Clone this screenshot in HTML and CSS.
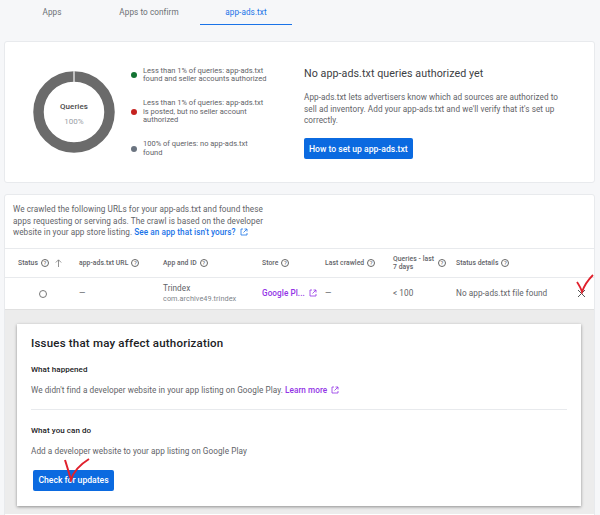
FILE: index.html
```html
<!DOCTYPE html>
<html>
  <head>
    <link rel="stylesheet" href="styles.css">
  </head>
  <body>
    <div class="tabs">
      <div class="tab">Apps</div>
      <div class="tab">Apps to confirm</div>
      <div class="tab active">app-ads.txt</div>
    </div>

    <div class="card summary">
      <div class="donut">
        <svg width="82" height="82" viewBox="0 0 82 82">
          <circle cx="41" cy="41" r="35.5" fill="none" stroke="#6b6b6b" stroke-width="10.5"></circle>
          <rect x="40.3" y="0" width="1.4" height="11" fill="#e4e4e4"></rect>
        </svg>
        <div class="donut-label">
          <div class="donut-title">Queries</div>
          <div class="donut-value">100%</div>
        </div>
      </div>

      <div class="legend">
        <div class="legend-item">
          <span class="dot green"></span>
          <span>Less than 1% of queries: app-ads.txt found and seller accounts authorized</span>
        </div>
        <div class="legend-item">
          <span class="dot red"></span>
          <span>Less than 1% of queries: app-ads.txt is posted, but no seller account authorized</span>
        </div>
        <div class="legend-item">
          <span class="dot gray"></span>
          <span>100% of queries: no app-ads.txt found</span>
        </div>
      </div>

      <div class="about">
        <h2>No app-ads.txt queries authorized yet</h2>
        <p>App-ads.txt lets advertisers know which ad sources are authorized to sell ad inventory. Add your app-ads.txt and we'll verify that it's set up correctly.</p>
        <button class="btn">How to set up app-ads.txt</button>
      </div>
    </div>

    <div class="card results">
      <p class="intro">
        We crawled the following URLs for your app-ads.txt and found these apps requesting or serving ads. The crawl is based on the developer website in your app store listing.
        <a class="link">See an app that isn't yours?
          <svg class="ext" width="8" height="8" viewBox="0 0 8 8"><path d="M3 1H1v6h6V5M4.500 1H7v2.500M7 1L3.500 4.500" fill="none" stroke="currentColor" stroke-width=".8"></path></svg>
        </a>
      </p>

      <div class="grid head">
        <div class="th">Status <span class="help">?</span>
          <svg class="sort" width="7" height="8" viewBox="0 0 7 8"><path d="M3.500 8V1M.8 3.500l2.700-2.700 2.700 2.700" fill="none" stroke="#777" stroke-width=".8"></path></svg>
        </div>
        <div class="th">app-ads.txt URL <span class="help">?</span></div>
        <div class="th">App and ID <span class="help">?</span></div>
        <div class="th">Store <span class="help">?</span></div>
        <div class="th">Last crawled <span class="help">?</span></div>
        <div class="th"><span class="th-wrap">Queries - last 7 days</span> <span class="help">?</span></div>
        <div class="th">Status details <span class="help">?</span></div>
      </div>

      <div class="grid row">
        <div class="radio-cell"><span class="radio"></span></div>
        <div>—</div>
        <div>
          <div>Trindex</div>
          <div class="app-id">com.archive49.trindex</div>
        </div>
        <div class="store">Google Pl...
          <svg class="ext" width="8" height="8" viewBox="0 0 8 8"><path d="M3 1H1v6h6V5M4.500 1H7v2.500M7 1L3.500 4.500" fill="none" stroke="currentColor" stroke-width=".8"></path></svg>
        </div>
        <div>—</div>
        <div>&lt; 100</div>
        <div class="details">No app-ads.txt file found
          <svg class="close" width="9" height="9" viewBox="0 0 9 9"><path d="M1 1l7 7M8 1L1 8" stroke="#555" stroke-width="1"></path></svg>
        </div>
      </div>

      <div class="expanded">
        <div class="issues">
          <h3>Issues that may affect authorization</h3>
          <h4>What happened</h4>
          <p>We didn't find a developer website in your app listing on Google Play. <a class="store">Learn more
            <svg class="ext" width="8" height="8" viewBox="0 0 8 8"><path d="M3 1H1v6h6V5M4.500 1H7v2.500M7 1L3.500 4.500" fill="none" stroke="currentColor" stroke-width=".8"></path></svg>
          </a></p>
          <hr>
          <h4>What you can do</h4>
          <p>Add a developer website to your app listing on Google Play</p>
          <button class="btn">Check for updates</button>
        </div>
      </div>
    </div>

    <!-- red marks drawn over the screenshot -->
    <svg class="mark mark-close" width="18" height="20" viewBox="0 0 18 20"><path d="M1 8c2 3 4 6 5 10C8 12 12 6 17 1" fill="none" stroke="#e0202c" stroke-width="1.800"></path></svg>
    <svg class="mark mark-check" width="26" height="24" viewBox="0 0 26 24"><path d="M1 2c2 6 4 13 6 20C9 14 17 6 25 1" fill="none" stroke="#e0202c" stroke-width="2"></path></svg>
  </body>
</html>
```

FILE: styles.css
```css
body {
  position: relative;
  height: 515px;
  margin: 0;
  padding: 0 4px;
  box-sizing: border-box;
  overflow: hidden;
  background-color: #f6f7f9;
  color: #5f6368;
  font-family: Roboto, "Liberation Sans", sans-serif;
  font-size: 8.200px;
  line-height: 11.700px;
  letter-spacing: 0.06px;
}

h2, h3, h4, p {
  margin: 0;
  font-weight: normal;
}

.tabs {
  display: flex;
  gap: 5px;
  height: 26px;
  margin-bottom: 15px;
  padding-left: 2px;
}

.tab {
  width: 92px;
  height: 24px;
  line-height: 24px;
  text-align: center;
  color: #6b6f74;
}

.tab.active {
  color: #1a73e8;
  border-bottom: 1px solid #1a73e8;
}

.card {
  box-sizing: border-box;
  width: 591px;
  background-color: white;
  border: 1px solid #e8eaed;
  border-radius: 3px;
}

.summary {
  display: flex;
  align-items: center;
  height: 142px;
  margin-bottom: 11px;
  padding-left: 28px;
}

.donut {
  position: relative;
  width: 82px;
  height: 82px;
  margin-right: 16px;
}

.donut svg {
  display: block;
}

.donut-label {
  position: absolute;
  top: 30px;
  left: 0;
  right: 0;
  text-align: center;
  font-size: 8px;
}

.donut-title {
  color: #4a4a4a;
  font-weight: 500;
}

.donut-value {
  margin-top: 3px;
  color: #9aa0a6;
}

.legend {
  display: flex;
  flex-direction: column;
  gap: 15px;
  width: 137px;
  margin-right: 36px;
  font-size: 7.500px;
  line-height: 8.700px;
  letter-spacing: 0;
}

.legend-item {
  display: flex;
  align-items: center;
  gap: 6px;
}

.dot {
  flex: none;
  width: 6px;
  height: 6px;
  border-radius: 50%;
}

.green { background-color: #137333; }
.red { background-color: #c5221f; }
.gray { background-color: #6b7480; }

.about {
  width: 262px;
  padding-top: 1px;
}

.about h2 {
  margin-bottom: 10px;
  color: #3c4043;
  font-size: 10.700px;
  line-height: 16px;
}

.about p {
  margin-bottom: 11px;
}

.btn {
  display: block;
  height: 21px;
  padding: 0 5px;
  background-color: #0b6ae0;
  border: none;
  border-radius: 2px;
  color: white;
  font-family: inherit;
  font-size: 8.600px;
  font-weight: 500;
  white-space: nowrap;
}

.results {
  height: 330px;
}

.intro {
  height: 53px;
  box-sizing: border-box;
  padding: 9px 325px 0 8px;
}

.link {
  color: #1a73e8;
  font-weight: 500;
}

.ext {
  vertical-align: -1px;
  margin-left: 2px;
}

.grid {
  display: grid;
  grid-template-columns: 61px 84px 99px 63px 68px 63px 1fr;
  align-items: center;
  padding-left: 13px;
  border-top: 1px solid #e8eaed;
}

.head {
  height: 29px;
  box-sizing: border-box;
}

.th {
  display: flex;
  align-items: center;
  gap: 3px;
  color: #5f6368;
  font-size: 6.800px;
  font-weight: 500;
  line-height: 8.500px;
}

.th-wrap {
  width: 42px;
}

.help {
  display: inline-block;
  flex: none;
  box-sizing: border-box;
  width: 8px;
  height: 8px;
  border: 0.800px solid #666;
  border-radius: 50%;
  font-size: 6px;
  font-weight: normal;
  line-height: 6.500px;
  text-align: center;
}

.sort {
  margin-left: 3px;
}

.row {
  height: 32px;
  box-sizing: border-box;
}

.radio-cell {
  padding-left: 21px;
}

.radio {
  display: block;
  box-sizing: border-box;
  width: 8px;
  height: 8px;
  border: 1px solid #777;
  border-radius: 50%;
}

.app-id {
  color: #80868b;
  font-size: 7.300px;
  line-height: 10px;
}

.store {
  color: #9334e6;
  font-weight: 500;
}

.details {
  display: flex;
  justify-content: space-between;
  padding-right: 8px;
}

.close {
  margin-top: 1px;
}

.expanded {
  box-sizing: border-box;
  height: 205px;
  padding: 14px 12px;
  background-color: #ececec;
  border-top: 1px solid #e0e0e0;
}

.issues {
  box-sizing: border-box;
  width: 564px;
  height: 182px;
  padding: 11px 14px;
  background-color: white;
  box-shadow: 0 1px 3px rgba(0, 0, 0, 0.4);
}

.issues h3 {
  margin-bottom: 13px;
  color: #202124;
  font-size: 11.500px;
  font-weight: 500;
  line-height: 16px;
  letter-spacing: 0.2px;
}

.issues h4 {
  margin-bottom: 9px;
  color: #202124;
  font-size: 8px;
  font-weight: 500;
}

.issues hr {
  margin: 13px 0 15px;
  border: none;
  border-top: 1px solid #e8eaed;
}

.issues .btn {
  margin: 12px 0 0 2px;
  width: 81px;
}

.mark {
  position: absolute;
}

.mark-close {
  top: 274px;
  left: 576px;
}

.mark-check {
  top: 458px;
  left: 64px;
}
```
